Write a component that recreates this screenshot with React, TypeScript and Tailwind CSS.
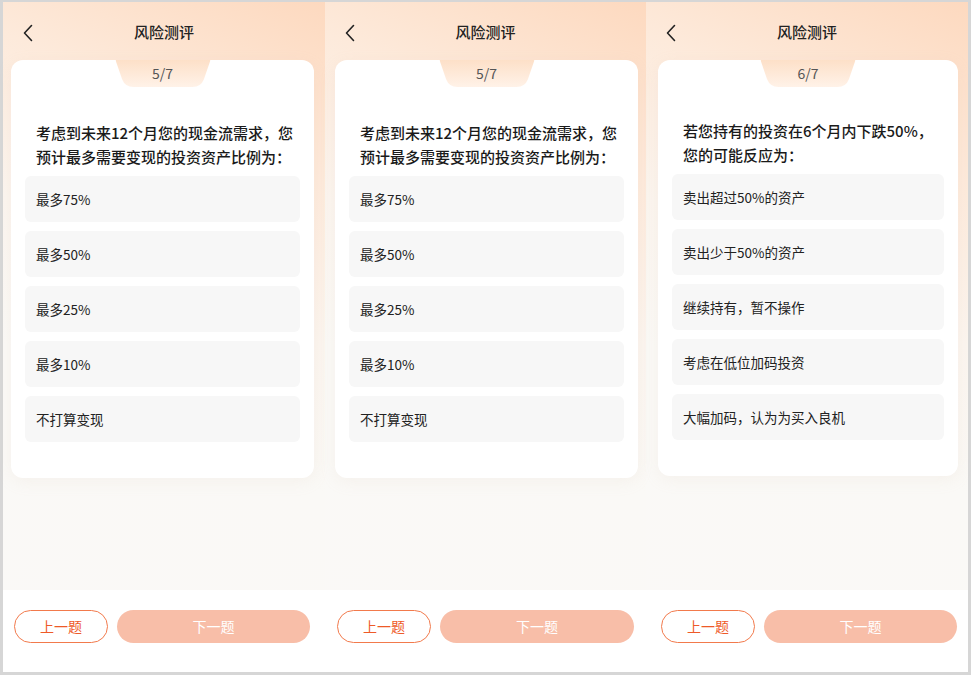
import React from "react";

type PanelProps = {
  width: string;
  step: string;
  lines: string[];
  options: string[];
  questionTop: string;
  cardPad: string;
  footPad: string;
};

const font = { fontFamily: '"Noto Sans CJK SC", "Noto Sans", sans-serif' };

function Notch({ label }: { label: string }) {
  return (
    <div className="absolute left-1/2 top-0 h-[27px] w-[95px] -translate-x-1/2">
      <svg width="95" height="27" viewBox="0 0 95 27" className="absolute inset-0">
        <defs>
          <linearGradient id="notchFill" x1="0" y1="0" x2="0" y2="1">
            <stop offset="0%" stopColor="#fde0c8" />
            <stop offset="100%" stopColor="#fff2e8" />
          </linearGradient>
        </defs>
        <path d="M0 0 L95 0 L88.5 19 Q85.5 27 77 27 L18 27 Q9.5 27 6.5 19 Z" fill="url(#notchFill)" />
      </svg>
      <span className="relative flex h-full items-center justify-center text-[14px] text-[#555]">{label}</span>
    </div>
  );
}

function Panel({ width, step, lines, options, questionTop, cardPad, footPad }: PanelProps) {
  return (
    <div
      className={`${width} flex h-[670px] shrink-0 flex-col bg-[linear-gradient(205deg,#fdd9bf_0%,#fdeadb_22%,#fbf5ef_42%,#faf9f6_60%,#faf9f7_100%)]`}
    >
      <header className="relative flex h-[58px] shrink-0 items-center justify-center">
        <svg width="12" height="18" viewBox="0 0 12 18" className="absolute left-[19px] top-[22px]">
          <polyline points="9.5,1.5 2.5,9 9.5,16.5" fill="none" stroke="#222" strokeWidth="1.6" strokeLinecap="round" strokeLinejoin="round" />
        </svg>
        <h1 className="mt-[3px] text-[15px] font-medium text-[#222]">风险测评</h1>
      </header>
      <div className={cardPad}>
        <div className="relative rounded-[12px] bg-white px-[14px] pb-[36px] shadow-[0_4px_16px_rgba(210,190,170,0.12)]">
          <Notch label={step} />
          <div className={`${questionTop} pl-[11px] text-[15px] font-medium leading-[24px] text-[#1a1a1a]`}>
            {lines.map((l) => (
              <p key={l} className="whitespace-nowrap">{l}</p>
            ))}
          </div>
          <ul className="mt-[7px] flex flex-col gap-[9px]">
            {options.map((o) => (
              <li key={o} className="flex h-[46px] items-center rounded-[6px] bg-[#f7f7f7] pl-[11px] text-[13.5px] text-[#222]">
                {o}
              </li>
            ))}
          </ul>
        </div>
      </div>
      <div className="flex-1" />
      <footer className={`${footPad} flex h-[82px] shrink-0 items-start gap-[9px] bg-white pt-[20px]`}>
        <button className="flex h-[33px] w-[94px] items-center justify-center rounded-full border border-[#f27a4c] text-[14px] text-[#ee5a28]">
          上一题
        </button>
        <button className="flex h-[33px] flex-1 items-center justify-center rounded-full bg-[#f8bea8] text-[14px] text-white">
          下一题
        </button>
      </footer>
    </div>
  );
}

const q5 = {
  step: "5/7",
  lines: ["考虑到未来12个月您的现金流需求，您", "预计最多需要变现的投资资产比例为："],
  options: ["最多75%", "最多50%", "最多25%", "最多10%", "不打算变现"],
};

const q6 = {
  step: "6/7",
  lines: ["若您持有的投资在6个月内下跌50%，", "您的可能反应为："],
  options: ["卖出超过50%的资产", "卖出少于50%的资产", "继续持有，暂不操作", "考虑在低位加码投资", "大幅加码，认为为买入良机"],
};

export default function App() {
  return (
    <div className="h-[675px] w-[971px] overflow-hidden bg-[#d6d6d6] pl-[3px] pt-[2px]" style={font}>
      <div className="flex">
        <Panel width="w-[322px]" questionTop="pt-[61px]" cardPad="pl-[8px] pr-[11px]" footPad="pl-[11px] pr-[15px]" {...q5} />
        <Panel width="w-[321px]" questionTop="pt-[61px]" cardPad="pl-[10px] pr-[8px]" footPad="pl-[12px] pr-[12px]" {...q5} />
        <Panel width="w-[322px]" questionTop="pt-[59px]" cardPad="pl-[12px] pr-[10px]" footPad="pl-[15px] pr-[11px]" {...q6} />
      </div>
    </div>
  );
}
